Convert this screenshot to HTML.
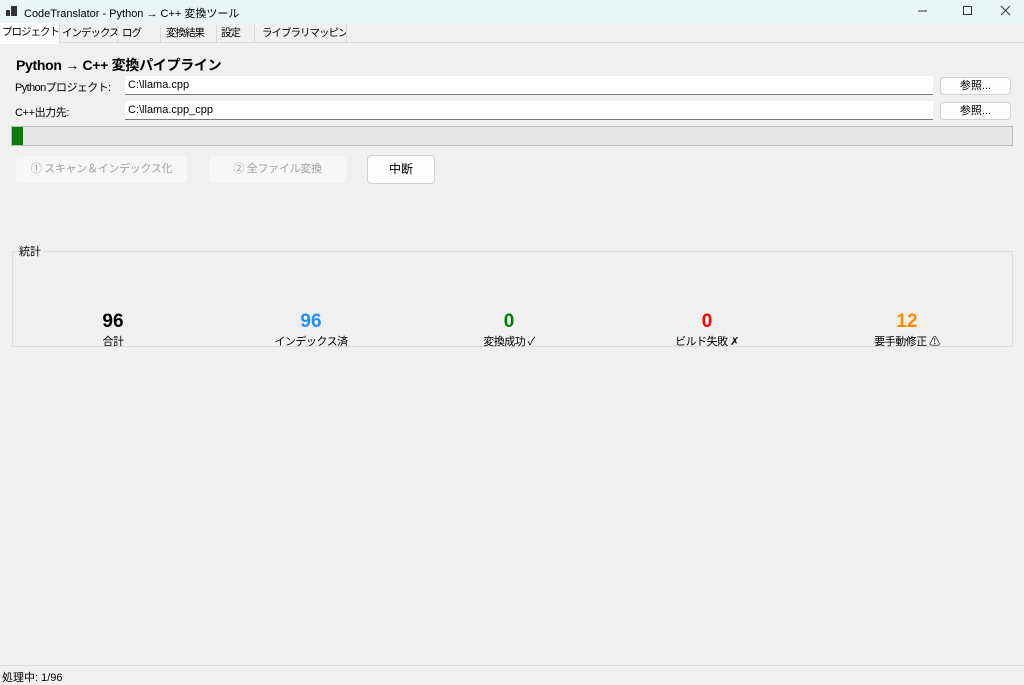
<!DOCTYPE html>
<html><head><meta charset="utf-8"><style>
*{margin:0;padding:0;box-sizing:border-box}
body{width:1024px;height:682px;background:#f0f0f0;font-family:"Liberation Sans","Noto Sans CJK JP",sans-serif;font-size:11px;color:#000;position:relative;overflow:hidden;white-space:nowrap}
.a{position:absolute}
.title{left:0;top:0;width:1024px;height:24px;background:#e8f6f5}
.tab{top:25px;height:18px;line-height:17px;font-size:10.5px;letter-spacing:-1px;padding-left:2px;border-right:1px solid #d8d8d8;overflow:hidden}
.inp{background:#fff;border-bottom:1px solid #7a7a7a;height:19px;line-height:18px;padding-left:3px}
.btn{background:#fdfdfd;border:1px solid #d0d0d0;border-radius:4px;text-align:center}
.dis{background:#f7f7f7;border-radius:4px;text-align:center;color:#a0a0a0;font-size:11px;letter-spacing:-0.3px;line-height:27px}
.num{top:311px;width:160px;text-align:center;font-size:19px;font-weight:bold}
.lbl{top:333px;width:160px;text-align:center;font-size:11px;letter-spacing:-0.5px}
</style></head><body>
<div class="a title"></div>
<svg class="a" style="left:6px;top:6px" width="12" height="12"><rect x="0" y="4" width="4" height="6" fill="#333"/><rect x="5" y="0" width="6" height="10" fill="#333"/></svg>
<div class="a" style="left:24px;top:5px;font-size:11px">CodeTranslator - Python → C++ 変換ツール</div>
<svg class="a" style="left:918px;top:4px" width="100" height="14" stroke="#333" fill="none"><line x1="0" y1="7" x2="9" y2="7"/><rect x="45.5" y="2.5" width="8" height="8"/><path d="M83 2l9 9M92 2l-9 9"/></svg>
<div class="a" style="left:0;top:24px;width:1024px;height:19px;background:#f0f0f0;border-bottom:1px solid #dcdcdc"></div>
<div class="a tab" style="left:0;width:60px;background:#fff;top:23px;height:21px;line-height:19px;padding-left:2px">プロジェクト</div>
<div class="a tab" style="left:60px;width:58px">インデックス</div>
<div class="a tab" style="left:118px;width:43px;padding-left:4px">ログ</div>
<div class="a tab" style="left:161px;width:56px;padding-left:5px">変換結果</div>
<div class="a tab" style="left:217px;width:38px;padding-left:4px">設定</div>
<div class="a tab" style="left:255px;width:92px;padding-left:7px">ライブラリマッピング</div>
<div class="a" style="left:16px;top:55px;font-size:14px;font-weight:bold;letter-spacing:-0.3px">Python → C++ 変換パイプライン</div>
<div class="a" style="left:15px;top:79px;letter-spacing:-0.6px">Pythonプロジェクト:</div>
<div class="a" style="left:15px;top:104px;letter-spacing:-0.4px">C++出力先:</div>
<div class="a inp" style="left:125px;top:76px;width:808px">C:\llama.cpp</div>
<div class="a inp" style="left:125px;top:101px;width:808px">C:\llama.cpp_cpp</div>
<div class="a btn" style="left:940px;top:77px;width:71px;height:18px;line-height:16px">参照...</div>
<div class="a btn" style="left:940px;top:102px;width:71px;height:18px;line-height:16px">参照...</div>
<div class="a" style="left:11px;top:126px;width:1002px;height:20px;background:#e6e6e6;border:1px solid #bcbcbc"></div>
<div class="a" style="left:12px;top:127px;width:11px;height:18px;background:#0f7b0f"></div>
<div class="a dis" style="left:16px;top:156px;width:171px;height:27px">① スキャン＆インデックス化</div>
<div class="a dis" style="left:209px;top:156px;width:137px;height:27px">② 全ファイル変換</div>
<div class="a btn" style="left:367px;top:155px;width:68px;height:29px;line-height:27px;font-size:12px">中断</div>
<div class="a" style="left:12px;top:251px;width:1001px;height:96px;border:1px solid #dcdcdc"></div>
<div class="a" style="left:19px;top:243px;font-size:11px;background:#f0f0f0;padding-right:2px">統計</div>
<div class="a num" style="left:33px">96</div><div class="a lbl" style="left:33px">合計</div>
<div class="a num" style="left:231px;color:#1e90ff">96</div><div class="a lbl" style="left:231px">インデックス済</div>
<div class="a num" style="left:429px;color:#008000">0</div><div class="a lbl" style="left:429px">変換成功 ✓</div>
<div class="a num" style="left:627px;color:#ff0000">0</div><div class="a lbl" style="left:627px">ビルド失敗 ✗</div>
<div class="a num" style="left:827px;color:#ff8c00">12</div><div class="a lbl" style="left:827px">要手動修正 ⚠</div>
<div class="a" style="left:0;top:665px;width:1024px;height:1px;background:#dcdcdc"></div>
<div class="a" style="left:0;top:666px;width:1024px;height:16px;background:#f0f0f0"></div>
<div class="a" style="left:2px;top:669px">処理中: 1/96</div>
</body></html>
